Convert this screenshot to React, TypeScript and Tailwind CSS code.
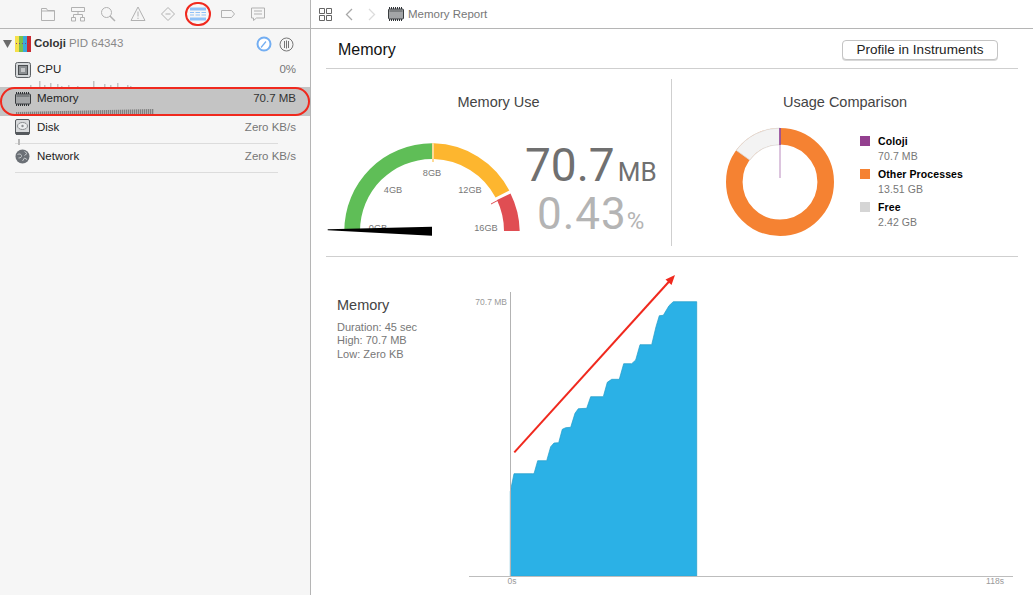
import type { ReactNode } from "react";

const sans = "[font-family:'Liberation_Sans',Arial,sans-serif]";

const chartPoints = [
  [541, 680], [552, 626], [607, 626], [612, 626], [623, 587], [650, 587], [662, 545], [672, 534],
  [686, 533], [697, 493], [707, 488], [722, 487], [735, 445], [745, 431], [770, 430], [782, 395],
  [820, 395], [832, 352], [845, 343], [868, 343], [881, 296], [905, 296], [917, 285], [930, 239],
  [965, 239], [978, 185], [988, 152], [1000, 151], [1017, 122], [1030, 110], [1100, 110], [1100, 934],
  [541, 934],
]
  .map(([x, y]) => `${(330 + x / 3).toFixed(1)},${(265 + y / 3).toFixed(1)}`)
  .join(" ");

const cpuBars = [
  [30, 2], [39, 6], [44, 2], [50, 4], [57, 3], [61, 1], [68, 2], [77, 1], [93, 6], [104, 3],
  [110, 2], [117, 4], [127, 2], [130, 1],
];

const memoryBars = Array.from({ length: 69 }, (_, i) => i);

function ToolIcon({ children }: { children: ReactNode }) {
  return (
    <svg width="18" height="18" viewBox="0 0 18 18" fill="none" stroke="#b1b1b1" strokeWidth="1">
      {children}
    </svg>
  );
}

function ChipIcon({ className }: { className?: string }) {
  return (
    <svg width="16" height="14" viewBox="0 0 16 14" className={className}>
      <rect x="0.5" y="2" width="15" height="10" rx="1" fill="#a3a5a7" stroke="#3a3d40" />
      <path d="M1 1H15M1 13H15" stroke="#2f3336" strokeWidth="2" strokeDasharray="1 1" />
      <path d="M1.5 4H14.5" stroke="#55585b" strokeWidth="1" />
    </svg>
  );
}

function Row({
  icon,
  label,
  value,
  selected,
  line,
  children,
}: {
  icon: ReactNode;
  label: string;
  value: string;
  selected?: boolean;
  line?: boolean;
  children?: ReactNode;
}) {
  return (
    <div className={`relative h-[29px] pl-[15px] ${selected ? "bg-[#c4c4c4]" : ""}`}>
      <div className={`flex h-[28px] items-start pt-[3px] ${line ? "mr-[32px] border-b border-[#dcdcdc]" : ""}`}>
        <div className="flex h-[17px] w-[22px] items-center">{icon}</div>
        <span className="text-[11.5px] leading-[17px] text-[#222]">{label}</span>
      </div>
      <span
        className={`absolute right-[14px] top-[3px] text-[11.5px] leading-[17px] ${
          selected ? "text-[#333]" : "text-[#777]"
        }`}
      >
        {value}
      </span>
      {children}
    </div>
  );
}

function Legend({ color, name, value }: { color: string; name: string; value: string }) {
  return (
    <div className="flex gap-[8px]">
      <div className={`mt-[2px] h-[10px] w-[10px] ${color}`} />
      <div className="text-[10.5px] leading-[15px] tracking-[0.1px]">
        <div className="font-bold text-black">{name}</div>
        <div className="text-[#777]">{value}</div>
      </div>
    </div>
  );
}

export default function App() {
  return (
    <div className={`flex h-[595px] w-[1033px] overflow-hidden bg-white ${sans}`}>
      <aside className="h-full w-[311px] shrink-0 border-r border-[#b5b5b5] bg-[#f6f6f6]">
        <div className="flex h-[29px] items-center border-b border-[#b5b5b5] pl-[33px]">
          <div className="flex h-[28px] w-[30px] items-center justify-center">
            <ToolIcon>
              <path d="M2.5 3.5h5l1 2h7v10h-13zM2.5 6h13" />
            </ToolIcon>
          </div>
          <div className="flex h-[28px] w-[30px] items-center justify-center">
            <ToolIcon>
              <path d="M2.5 2.5h13v4h-13zM9 6.5v3M4.5 12V9.5h9V12M2.5 12.5h4v3.5h-4zM11.5 12.5h4v3.5h-4z" />
            </ToolIcon>
          </div>
          <div className="flex h-[28px] w-[30px] items-center justify-center">
            <ToolIcon>
              <circle cx="7.5" cy="7.5" r="5" />
              <path d="M11 11l5 5" strokeWidth="1.5" />
            </ToolIcon>
          </div>
          <div className="flex h-[28px] w-[30px] items-center justify-center">
            <ToolIcon>
              <path d="M9 2L16 15.5H2z" />
              <path d="M9 6.5v5M9 12.7v1.3" />
            </ToolIcon>
          </div>
          <div className="flex h-[28px] w-[30px] items-center justify-center">
            <ToolIcon>
              <path d="M9 2.5L15.5 9L9 15.5L2.5 9z" strokeLinejoin="round" />
              <path d="M6.5 9h5" />
            </ToolIcon>
          </div>
          <div className="mx-[2px] flex h-[24px] w-[26px] items-center justify-center rounded-full border-2 border-[#f0291e]">
            <svg width="18" height="14" viewBox="0 0 18 14">
              <path d="M1 0.5h16v3H1zM1 10.5h16v3H1z" fill="#8fc1f7" />
              <path d="M1 5.5h4M6.5 5.5h4.5M12.5 5.5h4.5M1 8h4M6.5 8h4.5M12.5 8h4.5" stroke="#8fc1f7" />
            </svg>
          </div>
          <div className="flex h-[28px] w-[30px] items-center justify-center">
            <ToolIcon>
              <path d="M2.5 5.5h10l3 3.5l-3 3.5h-10z" />
            </ToolIcon>
          </div>
          <div className="flex h-[28px] w-[30px] items-center justify-center">
            <ToolIcon>
              <path d="M2.5 3h13v10h-8l-3 2.5V13h-2z" />
              <path d="M5 6h8M5 9h8" />
            </ToolIcon>
          </div>
        </div>

        <div className="flex h-[29px] items-center pl-[3px] pt-[1px]">
          <svg width="9" height="8" viewBox="0 0 9 8">
            <path d="M0 0h9L4.5 8z" fill="#6b6b6b" />
          </svg>
          <svg width="16" height="16" viewBox="0 0 16 16" className="ml-[3px]">
            <rect width="4" height="16" fill="#f6e04a" />
            <rect x="4" width="4" height="16" fill="#7cc04a" />
            <rect x="8" width="4" height="16" fill="#3aa9dc" />
            <rect x="12" width="4" height="16" fill="#c92a32" />
            <path d="M1 7.5h13" stroke="#7a3f8f" strokeWidth="1" strokeDasharray="1 2" />
          </svg>
          <span className="ml-[3px] text-[11.5px] font-bold text-[#333]">Coloji</span>
          <span className="ml-[3px] text-[11.5px] text-[#888]">PID 64343</span>
          <svg width="16" height="16" viewBox="0 0 16 16" className="ml-[133px]">
            <circle cx="8" cy="8" r="6.5" fill="#fff" stroke="#73aef2" strokeWidth="2" />
            <path d="M5 11.5L10 5.5" stroke="#73aef2" strokeWidth="1.2" />
          </svg>
          <svg width="15" height="15" viewBox="0 0 15 15" className="ml-[7px]">
            <circle cx="7.5" cy="7.5" r="6.5" fill="none" stroke="#777" />
            <path d="M5.5 4v7M7.5 3.5v8M9.5 4v7" stroke="#777" />
          </svg>
        </div>

        <Row
          label="CPU"
          value="0%"
          icon={
            <svg width="16" height="16" viewBox="0 0 16 16">
              <rect x="0.5" y="0.5" width="15" height="15" rx="2" fill="#d5d8da" stroke="#5c6064" />
              <rect x="3.5" y="3.5" width="9" height="9" fill="#8b8f92" stroke="#4a4d50" />
              <rect x="6" y="6" width="4" height="4" fill="#c4c6c8" />
            </svg>
          }
        >
          <svg width="150" height="8" viewBox="0 0 150 8" className="absolute bottom-0 left-0">
            {cpuBars.map(([x, h]) => (
              <rect key={x} x={x} y={8 - h} width="1.5" height={h} fill="#c2c2c2" />
            ))}
          </svg>
        </Row>
        <Row selected label="Memory" value="70.7 MB" icon={<ChipIcon />}>
          <svg width="154" height="7" viewBox="0 0 154 7" className="absolute bottom-0 left-0">
            {memoryBars.map((i) => {
              const h = 3 + (i / 68) * 3;
              return <rect key={i} x={16 + i * 2} y={6 - h} width="1.3" height={h} fill="#808080" />;
            })}
          </svg>
          <div className="absolute inset-x-0 inset-y-0 rounded-full border-2 border-[#f0291e]" />
        </Row>
        <Row
          line
          label="Disk"
          value="Zero KB/s"
          icon={
            <svg width="16" height="17" viewBox="0 0 16 17">
              <rect x="0.5" y="0.5" width="14" height="15" rx="1.5" fill="#d8dadc" stroke="#55595d" />
              <rect x="1" y="13" width="13" height="3" fill="#55595d" />
              <ellipse cx="7.5" cy="7" rx="5" ry="3.5" fill="#eceeef" stroke="#8a8d90" />
              <circle cx="7.5" cy="7" r="1.2" fill="#8a8d90" />
            </svg>
          }
        >
          <div className="absolute bottom-0 left-[18px] h-[6px] w-[2px] bg-[#b8b8b8]" />
        </Row>
        <Row
          line
          label="Network"
          value="Zero KB/s"
          icon={
            <svg width="15" height="15" viewBox="0 0 15 15">
              <circle cx="7.5" cy="7.5" r="7" fill="#6b7076" />
              <path d="M2.5 5.5c2-1 3.5-.5 4 1s-1 2.5-3 2.5M9.5 2.5l2.5 2l-2.5 2M7.5 12l2-3l2.5 1.5" fill="none" stroke="#c5c8cb" strokeWidth="1" />
            </svg>
          }
        />
      </aside>

      <main className="flex h-full min-w-0 flex-1 flex-col">
        <div className="flex h-[29px] shrink-0 items-center border-b border-[#b5b5b5] pl-[8px]">
          <svg width="13" height="13" viewBox="0 0 13 13" fill="none" stroke="#666">
            <path d="M0.5 0.5h5v5h-5zM7.5 0.5h5v5h-5zM0.5 7.5h5v5h-5zM7.5 7.5h5v5h-5z" />
          </svg>
          <svg width="8" height="13" viewBox="0 0 8 13" fill="none" stroke="#a8a8a8" strokeWidth="1.3" className="ml-[13px]">
            <path d="M7 1L1.5 6.5L7 12" />
          </svg>
          <svg width="8" height="13" viewBox="0 0 8 13" fill="none" stroke="#dcdcdc" strokeWidth="1.3" className="ml-[15px]">
            <path d="M1 1L6.5 6.5L1 12" />
          </svg>
          <ChipIcon className="ml-[12px]" />
          <span className="ml-[4px] mt-[1px] text-[11.5px] text-[#777]">Memory Report</span>
        </div>

        <div className="flex min-h-0 flex-1 flex-col px-[15px]">
          <div className="flex h-[40px] shrink-0 items-center justify-between border-b border-[#cfcfcf] pl-[12px] pr-[20px]">
            <h1 className="mt-[2px] text-[16px] leading-[20px] text-[#111]">Memory</h1>
            <button className="mt-[2px] h-[20px] w-[156px] rounded-[4px] border border-[#c4c4c4] bg-white text-[13.5px] leading-[18px] text-[#222] shadow-[0_1px_0_#d8d8d8]">
              Profile in Instruments
            </button>
          </div>

          <div className="flex h-[188px] shrink-0 border-b border-[#cfcfcf]">
            <div className="w-[345px] pt-[23px]">
              <h2 className="text-center text-[14.5px] leading-[20px] text-[#444]">Memory Use</h2>
              <div className="mt-[28px] flex">
                <svg width="198" height="105" viewBox="326 140 198 105">
                  <path d="M344.3 231A87.7 87.7 0 0 1 432 143.3V159A72 72 0 0 0 360 231Z" fill="#5fbe57" />
                  <path d="M434 143.3A87.7 87.7 0 0 1 509.3 190.5L495.6 197.5A72 72 0 0 0 434 159Z" fill="#fdb62f" />
                  <path d="M433 143V162" stroke="#fdb62f" strokeWidth="1" />
                  <path d="M510.5 193.5A87.7 87.7 0 0 1 519.7 231H504A72 72 0 0 0 497 200Z" fill="#e04e53" />
                  <path d="M491 204L498 200.3" stroke="#e04e53" strokeWidth="1" />
                  <g fontSize="9.2" fill="#777" textAnchor="middle">
                    <text x="378" y="231">0GB</text>
                    <text x="393" y="192.5">4GB</text>
                    <text x="432" y="176">8GB</text>
                    <text x="470" y="192.5">12GB</text>
                    <text x="486" y="231">16GB</text>
                  </g>
                  <path d="M327.7 229.3L432 226.7V235.7L327.7 230.3Z" fill="#000" />
                </svg>
                <div className="ml-[1px] font-['Roboto',sans-serif] font-normal">
                  <div className="-mt-[3px] flex h-[54px] items-baseline whitespace-nowrap leading-[56px] text-[#707070]">
                    <span className="text-[46px]">70.7</span>
                    <span className="ml-[3px] text-[26px]">MB</span>
                  </div>
                  <div className="ml-[12px] flex h-[46px] items-baseline whitespace-nowrap leading-[46px] text-[#b4b4b4]">
                    <span className="text-[44px] tracking-[1px]">0.43</span>
                    <span className="text-[24px]">%</span>
                  </div>
                </div>
              </div>
            </div>

            <div className="my-[10px] w-px bg-[#cfcfcf]" />

            <div className="flex-1 pt-[23px]">
              <h2 className="text-center text-[14.5px] leading-[20px] text-[#444]">Usage Comparison</h2>
              <div className="ml-[50px] mt-[12px] flex">
                <svg width="116" height="116" viewBox="722 124 116 116">
                  <circle cx="780" cy="182" r="45.7" fill="none" stroke="#f58232" strokeWidth="16.6" />
                  <path d="M780 128A54 54 0 0 0 736.3 150.3L749.8 160.1A37.3 37.3 0 0 1 780 144.7Z" fill="#f3f3f3" stroke="#dddddd" strokeWidth="0.8" />
                  <path d="M780 128V145" stroke="#8f3f95" strokeWidth="1.6" />
                  <path d="M780 145V178" stroke="#b98abd" strokeWidth="1" />
                </svg>
                <div className="ml-[22px] mt-[10px] flex flex-col gap-[3px]">
                  <Legend color="bg-[#93408f]" name="Coloji" value="70.7 MB" />
                  <Legend color="bg-[#f58232]" name="Other Processes" value="13.51 GB" />
                  <Legend color="bg-[#d5d5d5]" name="Free" value="2.42 GB" />
                </div>
              </div>
            </div>
          </div>

          <div className="flex min-h-0 flex-1">
            <div className="w-[139px] shrink-0 pl-[11px] pt-[38px]">
              <h3 className="text-[14.5px] leading-[20px] text-[#444]">Memory</h3>
              <div className="mt-[6px] text-[11px] leading-[13.3px] text-[#777]">
                <div>Duration: 45 sec</div>
                <div>High: 70.7 MB</div>
                <div>Low: Zero KB</div>
              </div>
            </div>
            <svg width="555" height="325" viewBox="465 270 555 325" className="mt-[13px] shrink-0">
              <polygon points={chartPoints} fill="#2bb1e6" stroke="#1f9cc9" strokeWidth="0.7" />
              <path d="M510.5 292V576" stroke="#b3b3b3" />
              <path d="M469 576.5H1013" stroke="#bdbdbd" />
              <text x="507" y="304.5" fontSize="8.5" fill="#999" textAnchor="end">70.7 MB</text>
              <text x="512" y="584" fontSize="8.5" fill="#999" textAnchor="middle">0s</text>
              <text x="995" y="584" fontSize="8.5" fill="#999" textAnchor="middle">118s</text>
              <path d="M514.3 452.3L670 280.5" stroke="#f0291e" strokeWidth="2" />
              <path d="M675 275L665.5 279.5L671.5 285Z" fill="#f0291e" />
            </svg>
          </div>
        </div>
      </main>
    </div>
  );
}
